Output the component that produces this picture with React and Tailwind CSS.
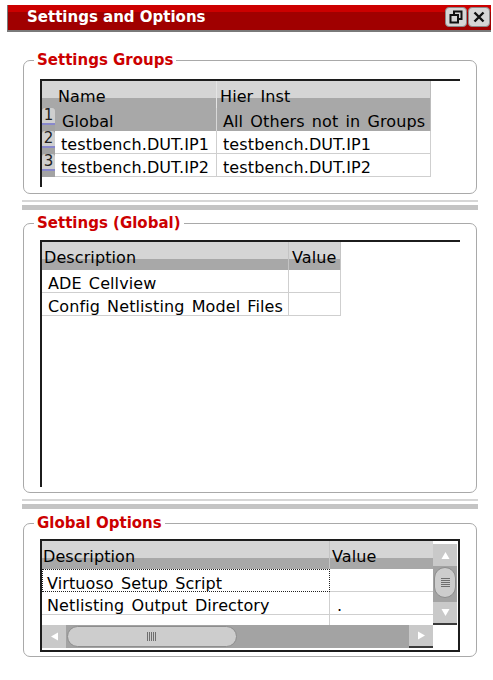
import React from 'react';

// header cells: light top, darker bottom band
const hdr = 'bg-[linear-gradient(#d5d5d5_17px,#a8a8a8_17px)]';
const cell = 'h-[23px] pt-[4px] leading-[19px] whitespace-nowrap overflow-hidden';

const TitleBar = () => (
  <div className="ml-[7px] mt-[5px] flex h-[27px] w-[484px] items-start border-b-2 border-l border-[#7a7a7a] bg-[linear-gradient(#cc0000_7px,#a00000_7px)]">
    <div className="flex-1 pl-[19px] pt-[2px] text-[15px] font-bold leading-[20px] text-white">Settings and Options</div>
    <div className="mt-[2px] mr-[1px] flex gap-[1px]">
      <div className="flex h-[20px] w-[22px] items-center justify-center rounded-[4px] border border-[#8a8a8a] bg-[#d6d6d6]">
        <svg width="14" height="14" viewBox="0 0 14 14" fill="none" stroke="#111" strokeWidth="2">
          <path d="M5 4V1.5h7.5V9H10" />
          <rect x="1.5" y="5" width="7.5" height="7.5" />
        </svg>
      </div>
      <div className="flex h-[20px] w-[22px] items-center justify-center rounded-[4px] border border-[#8a8a8a] bg-[#d6d6d6]">
        <svg width="12" height="12" viewBox="0 0 12 12" stroke="#111" strokeWidth="2.4">
          <path d="M1.5 1.5l9 9M10.5 1.5l-9 9" />
        </svg>
      </div>
    </div>
  </div>
);

const Group = ({ title, className, children }) => (
  <fieldset className={`ml-[23px] w-[454px] rounded-[7px] border border-[#a9a9a9] ${className}`}>
    <legend className="ml-[10px] px-[3px] text-[15px] font-bold leading-[18px] text-[#cc0000] [word-spacing:0px] tracking-normal">{title}</legend>
    {children}
  </fieldset>
);

const Splitter = () => (
  <div className="ml-[22px] w-[456px]">
    <div className="mt-[6px] h-[2px] bg-[#d6d6d6]" />
    <div className="mt-[3px] h-[5px] bg-[#c4c4c4]" />
  </div>
);

const RowNum = ({ n }) => (
  <div className="h-[23px] w-[13px] bg-[#a3a3a3]">
    <div className="h-[17px] rounded-t-[3px] border-b-2 border-[#8888cc] bg-[#cfcfcf] text-center text-[15px] leading-[15px] text-[#222]">{n}</div>
  </div>
);

const Arrow = ({ d }) => (
  <svg width="11" height="11" viewBox="0 0 11 11">
    <path d={d} fill="#ffffff" />
  </svg>
);

const GroupsTable = () => (
  <div className="h-[108px] w-[420px] border-l-2 border-t-2 border-[#1c1c1c]">
    <div className="flex h-[27px]">
      <div className={`w-[13px] ${hdr}`} />
      <div className={`w-[162px] border-r border-[#e4e4e4] pl-[3px] pt-[6px] leading-[19px] ${hdr}`}>Name</div>
      <div className={`w-[214px] border-r border-[#bcbcbc] pl-[3px] pt-[6px] leading-[19px] ${hdr}`}>Hier Inst</div>
    </div>
    <div className="flex">
      <RowNum n="1" />
      <div className={`w-[162px] border-r border-[#d8d8d8] bg-[#a8a8a8] pl-[7px] ${cell}`}>Global</div>
      <div className={`w-[214px] border-r border-[#bcbcbc] bg-[#a8a8a8] pl-[6px] ${cell}`}>All Others not in Groups</div>
    </div>
    {['testbench.DUT.IP1', 'testbench.DUT.IP2'].map((t, i) => (
      <div key={t} className="flex">
        <RowNum n={i + 2} />
        <div className={`w-[162px] border-b border-r border-[#cfcfcf] pl-[6px] ${cell}`}>{t}</div>
        <div className={`w-[214px] border-b border-r border-[#cfcfcf] pl-[6px] ${cell}`}>{t}</div>
      </div>
    ))}
  </div>
);

const SettingsTable = () => (
  <div className="h-[247px] w-[420px] border-l-2 border-t-2 border-[#1c1c1c]">
    <div className="flex h-[28px]">
      <div className={`w-[247px] border-r border-[#c4c4c4] pl-[2px] pt-[6px] leading-[19px] ${hdr}`}>Description</div>
      <div className={`w-[52px] border-r border-[#c4c4c4] pl-[3px] pt-[6px] leading-[19px] ${hdr}`}>Value</div>
    </div>
    {['ADE Cellview', 'Config Netlisting Model Files'].map((t) => (
      <div key={t} className="flex">
        <div className={`w-[247px] border-b border-r border-[#cfcfcf] pl-[6px] ${cell}`}>{t}</div>
        <div className={`w-[52px] border-b border-r border-[#cfcfcf] ${cell}`} />
      </div>
    ))}
  </div>
);

const OptionsTable = () => (
  <div className="flex h-[113px] w-[420px] border-2 border-[#1c1c1c]">
    <div className="flex w-[391px] flex-col">
      <div className="flex h-[28px]">
        <div className={`w-[288px] border-r border-[#c4c4c4] pl-[1px] pt-[6px] leading-[19px] ${hdr}`}>Description</div>
        <div className={`w-[103px] pl-[2px] pt-[6px] leading-[19px] ${hdr}`}>Value</div>
      </div>
      <div className="flex">
        <div className={`w-[288px] border border-dotted border-[#222] pl-[4px] ${cell}`}>Virtuoso Setup Script</div>
        <div className={`w-[103px] border-b border-[#cfcfcf] ${cell}`} />
      </div>
      <div className="flex">
        <div className={`w-[288px] border-b border-r border-[#cfcfcf] pl-[5px] ${cell}`}>Netlisting Output Directory</div>
        <div className={`w-[103px] border-b border-[#cfcfcf] pl-[7px] ${cell}`}>.</div>
      </div>
      <div className="flex h-[10px]">
        <div className="w-[288px] border-r border-[#cfcfcf]" />
      </div>
      <div className="flex h-[23px]">
        <div className="flex w-[24px] items-center justify-center bg-[#c9c9c9]">
          <Arrow d="M2 5.5L9 1.5v8z" />
        </div>
        <div className="flex flex-1 items-center bg-[#a3a3a3] pl-[1px]">
          <div className="flex h-[21px] w-[170px] items-center justify-center rounded-[11px] border border-[#8d8d8d] bg-[#cdcdcd]">
            <svg width="12" height="9" viewBox="0 0 12 9" stroke="#6e6e6e" strokeWidth="1">
              <path d="M1.5 0v9M3.5 0v9M5.5 0v9M7.5 0v9M9.5 0v9" />
            </svg>
          </div>
        </div>
        <div className="flex w-[24px] items-center justify-center border-b-2 border-[#3a3a3a] bg-[#c9c9c9]">
          <Arrow d="M9 5.5L2 1.5v8z" />
        </div>
      </div>
    </div>
    <div className="flex w-[25px] flex-col">
      <div className="h-[2px]" />
      <div className="flex h-[23px] w-[24px] items-center justify-center border-t border-white bg-[#c9c9c9]">
        <Arrow d="M5.5 2L9.5 9h-8z" />
      </div>
      <div className="h-[36px] w-[24px] bg-[#a3a3a3] px-[1px] pt-[1px]">
        <div className="flex h-[31px] items-center justify-center rounded-[11px] border border-[#8d8d8d] bg-[#cdcdcd]">
          <svg width="9" height="12" viewBox="0 0 9 12" stroke="#6e6e6e" strokeWidth="1">
            <path d="M0 1.5h9M0 3.5h9M0 5.5h9M0 7.5h9M0 9.5h9" />
          </svg>
        </div>
      </div>
      <div className="flex h-[23px] w-[24px] items-center justify-center border-b-2 border-[#3a3a3a] bg-[#c9c9c9]">
        <Arrow d="M5.5 9L9.5 2h-8z" />
      </div>
    </div>
  </div>
);

const App = () => {
  return (
    <div className="flex min-h-[680px] w-[493px] flex-col bg-white font-['DejaVu_Sans',sans-serif] text-[16px] text-black">
      <TitleBar />

      <div className="flex flex-col tracking-[0.1px] [word-spacing:2px]">
        <Group title="Settings Groups" className="mt-[19px]">
          <div className="pb-[6px] pl-[16px] pt-[10px]">
            <GroupsTable />
          </div>
        </Group>

        <Splitter />

        <Group title="Settings (Global)" className="mt-[4px]">
          <div className="pb-[5px] pl-[16px] pt-[8px]">
            <SettingsTable />
          </div>
        </Group>

        <Splitter />

        <Group title="Global Options" className="mt-[5px]">
          <div className="pb-[4px] pl-[16px] pt-[7px]">
            <OptionsTable />
          </div>
        </Group>
      </div>
    </div>
  );
};

export default App;
